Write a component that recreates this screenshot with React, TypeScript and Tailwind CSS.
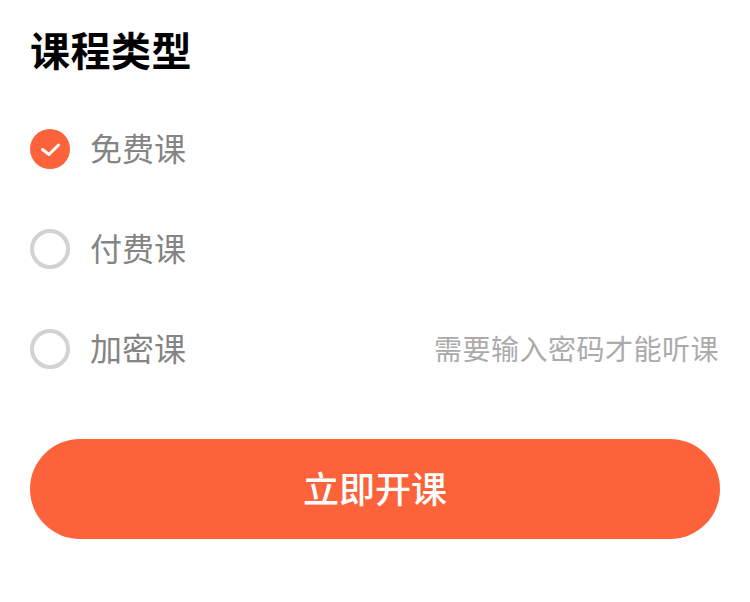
const options = [
  { label: '免费课', checked: true },
  { label: '付费课', checked: false },
  { label: '加密课', checked: false, hint: '需要输入密码才能听课' },
]

export default function App() {
  return (
    <div className="flex h-[602px] w-[750px] flex-col bg-white px-[30px] font-['Noto_Sans_CJK_SC',sans-serif]">
      <h1 className="mt-[22px] h-[54px] text-[40px] leading-[54px] font-bold tracking-[0.5px] text-black">课程类型</h1>
      <div className="mt-[23px] flex flex-col">
        {options.map((o) => (
          <div key={o.label} className="flex h-[100px] items-center">
            {o.checked ? (
              <span className="flex h-10 w-10 items-center justify-center rounded-full bg-[#fd633b]">
                <svg width="40" height="40" viewBox="0 0 40 40" fill="none">
                  <path d="M12.5 20.5l6.5 5 9.5-9.5" stroke="white" strokeWidth="3" strokeLinecap="round" strokeLinejoin="round" />
                </svg>
              </span>
            ) : (
              <span className="h-10 w-10 rounded-full border-4 border-[#d2d2d2]" />
            )}
            <span className="mb-1 ml-5 text-[32px] leading-10 text-[#848484]">{o.label}</span>
            {o.hint && (
              <span className="mr-px mb-0.5 ml-auto text-[28px] leading-10 tracking-[0.5px] text-[#ababab]">{o.hint}</span>
            )}
          </div>
        ))}
      </div>
      <button className="mt-[40px] h-[100px] w-[690px] rounded-full bg-[#fd633b] pb-1 text-[36px] font-medium text-white">
        立即开课
      </button>
    </div>
  )
}
